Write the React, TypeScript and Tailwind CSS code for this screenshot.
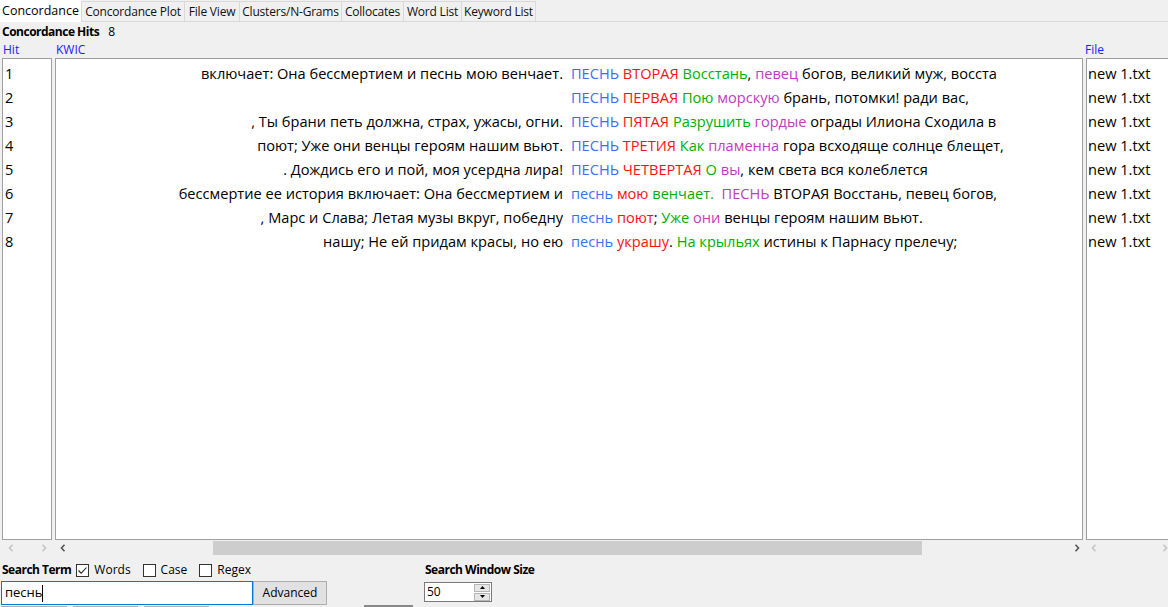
import React from "react";

type Seg = { t: string; c?: string };
type Row = { left: string; right: Seg[] };

const B = "#3f6ef5";
const R = "#ff1010";
const G = "#00b000";
const M = "#c03cc0";

const rows: Row[] = [
  {
    left: "включает: Она бессмертием и песнь мою венчает.",
    right: [
      { t: "ПЕСНЬ", c: B },
      { t: " " },
      { t: "ВТОРАЯ", c: R },
      { t: " " },
      { t: "Восстань", c: G },
      { t: ", " },
      { t: "певец", c: M },
      { t: " богов, великий муж, восста" },
    ],
  },
  {
    left: "",
    right: [
      { t: "ПЕСНЬ", c: B },
      { t: " " },
      { t: "ПЕРВАЯ", c: R },
      { t: " " },
      { t: "Пою", c: G },
      { t: " " },
      { t: "морскую", c: M },
      { t: " брань, потомки! ради вас," },
    ],
  },
  {
    left: ", Ты брани петь должна, страх, ужасы, огни.",
    right: [
      { t: "ПЕСНЬ", c: B },
      { t: " " },
      { t: "ПЯТАЯ", c: R },
      { t: " " },
      { t: "Разрушить", c: G },
      { t: " " },
      { t: "гордые", c: M },
      { t: " ограды Илиона Сходила в" },
    ],
  },
  {
    left: "поют; Уже они венцы героям нашим вьют.",
    right: [
      { t: "ПЕСНЬ", c: B },
      { t: " " },
      { t: "ТРЕТИЯ", c: R },
      { t: " " },
      { t: "Как", c: G },
      { t: " " },
      { t: "пламенна", c: M },
      { t: " гора всходяще солнце блещет," },
    ],
  },
  {
    left: ". Дождись его и пой, моя усердна лира!",
    right: [
      { t: "ПЕСНЬ", c: B },
      { t: " " },
      { t: "ЧЕТВЕРТАЯ", c: R },
      { t: " " },
      { t: "О", c: G },
      { t: " " },
      { t: "вы", c: M },
      { t: ", кем света вся колеблется" },
    ],
  },
  {
    left: "бессмертие ее история включает: Она бессмертием и",
    right: [
      { t: "песнь", c: B },
      { t: " " },
      { t: "мою", c: R },
      { t: " " },
      { t: "венчает.", c: G },
      { t: "\u00a0\u00a0" },
      { t: "ПЕСНЬ", c: M },
      { t: " ВТОРАЯ Восстань, певец богов," },
    ],
  },
  {
    left: ", Марс и Слава; Летая музы вкруг, победну",
    right: [
      { t: "песнь", c: B },
      { t: " " },
      { t: "поют", c: R },
      { t: "; " },
      { t: "Уже", c: G },
      { t: " " },
      { t: "они", c: M },
      { t: " венцы героям нашим вьют." },
    ],
  },
  {
    left: "нашу; Не ей придам красы, но ею",
    right: [
      { t: "песнь", c: B },
      { t: " " },
      { t: "украшу", c: R },
      { t: ". " },
      { t: "На крыльях", c: G },
      { t: " истины к Парнасу прелечу;" },
    ],
  },
];

const tabs = [
  { label: "Concordance", w: "w-[81px]", active: true },
  { label: "Concordance Plot", w: "w-[103px]" },
  { label: "File View", w: "w-[55px]" },
  { label: "Clusters/N-Grams", w: "w-[102px]" },
  { label: "Collocates", w: "w-[62px]" },
  { label: "Word List", w: "w-[58px]" },
  { label: "Keyword List", w: "w-[74px]" },
];

function Chevron({ dir, className }: { dir: "left" | "right"; className?: string }) {
  return (
    <svg viewBox="0 0 6 8" className={className} width="6" height="8">
      {dir === "left" ? (
        <path d="M4.5 0.8 L1.5 4 L4.5 7.2" fill="none" stroke="currentColor" strokeWidth="1.6" />
      ) : (
        <path d="M1.5 0.8 L4.5 4 L1.5 7.2" fill="none" stroke="currentColor" strokeWidth="1.6" />
      )}
    </svg>
  );
}

function Checkbox({ checked }: { checked?: boolean }) {
  return (
    <div className="w-[13px] h-[13px] border border-[#333] bg-white flex items-center justify-center">
      {checked && (
        <svg viewBox="0 0 11 11" width="11" height="11">
          <path d="M1.5 5.5 L4.2 8.2 L9.5 2.5" fill="none" stroke="#222" strokeWidth="1.1" />
        </svg>
      )}
    </div>
  );
}

export default function App() {
  return (
    <div
      className="w-[1168px] h-[607px] overflow-hidden bg-[#f0f0f0] text-[#000] flex flex-col"
      style={{ fontFamily: '"Open Sans", "Noto Sans", sans-serif' }}
    >
      {/* Tabs */}
      <div className="h-[22px] shrink-0 flex items-end border-b border-[#d9d9d9]">
        {tabs.map((t) =>
          t.active ? (
            <div
              key={t.label}
              className={`${t.w} h-[22px] bg-white flex items-center justify-center text-[12.5px] -mb-px`}
            >
              {t.label}
            </div>
          ) : (
            <div
              key={t.label}
              className={`${t.w} h-[20px] border-l border-t border-[#d9d9d9] flex items-center justify-center text-[12px] tracking-[-0.2px] text-[#111]`}
            >
              {t.label}
            </div>
          )
        )}
        <div className="w-px h-[20px] bg-[#d9d9d9]" />
      </div>

      {/* Hits */}
      <div className="h-[19px] shrink-0 flex items-center gap-[9px] pl-[2px] pt-[1px] text-[12px]">
        <span className="font-bold tracking-[-0.5px]">Concordance Hits</span>
        <span>8</span>
      </div>

      {/* Column labels */}
      <div className="h-[17px] shrink-0 flex items-center text-[12px] text-[#1a1aff]">
        <div className="w-[55px] pl-[3px]">Hit</div>
        <div className="w-[1030px] pl-[1px]">KWIC</div>
        <div>File</div>
      </div>

      {/* Panels */}
      <div className="h-[482px] shrink-0 flex gap-[3px] pl-[2px] text-[14.6px] leading-[24px]">
        <div className="w-[50px] bg-white border border-[#a0a0a0] pt-[2px] pl-[2px]">
          {rows.map((_, i) => (
            <div key={i}>{i + 1}</div>
          ))}
        </div>
        <div className="w-[1028px] bg-white border border-[#a0a0a0] pt-[2px]">
          {rows.map((r, i) => (
            <div key={i} className="flex whitespace-nowrap">
              <div className="w-[507px] text-right overflow-hidden">{r.left}</div>
              <div className="pl-[8px]">
                {r.right.map((s, j) => (
                  <span key={j} style={s.c ? { color: s.c } : undefined}>
                    {s.t}
                  </span>
                ))}
              </div>
            </div>
          ))}
        </div>
        <div className="flex-1 bg-white border border-[#a0a0a0] border-r-0 pt-[2px] pl-[1px]">
          {rows.map((_, i) => (
            <div key={i}>new 1.txt</div>
          ))}
        </div>
      </div>

      {/* Scrollbars */}
      <div className="h-[16px] shrink-0 flex items-center">
        <div className="w-[55px] flex items-center gap-[27px] pl-[8px] text-[#c4c4c4]">
          <Chevron dir="left" />
          <Chevron dir="right" />
        </div>
        <div className="w-[1031px] flex items-center h-full">
          <div className="w-[158px] pl-[5px] text-[#555] flex items-center">
            <Chevron dir="left" />
          </div>
          <div className="w-[709px] h-[14px] bg-[#cdcdcd]" />
          <div className="flex-1 flex justify-end pr-[6px] text-[#555]">
            <Chevron dir="right" />
          </div>
        </div>
        <div className="flex-1 flex items-center justify-between pl-[5px] text-[#c4c4c4]">
          <Chevron dir="left" />
          <Chevron dir="right" />
        </div>
      </div>

      {/* Search controls */}
      <div className="flex shrink-0 pt-[4px] text-[12px]">
        <div className="w-[424px] pl-[2px]">
          <div className="h-[20px] flex items-center">
            <span className="font-bold tracking-[-0.5px] mr-[5px]">Search Term</span>
            <Checkbox checked />
            <span className="ml-[5px] mr-[12px]">Words</span>
            <Checkbox />
            <span className="ml-[5px] mr-[12px]">Case</span>
            <Checkbox />
            <span className="ml-[5px]">Regex</span>
          </div>
          <div className="flex mt-[1px] -ml-[1px]">
            <div className="w-[252px] h-[24px] border border-[#0078d7] bg-white flex items-center pl-[3px] text-[13px]">
              песнь<span className="w-px h-[17px] bg-black" />
            </div>
            <button className="w-[74px] h-[24px] bg-[#e1e1e1] border border-[#adadad] text-[12px]">
              Advanced
            </button>
          </div>
          <div className="flex gap-[6px] mt-[1px] -ml-[1px]">
            <div className="w-[66px] h-[20px] border border-[#adadad] bg-[#e1e1e1]" />
            <div className="w-[65px] h-[20px] border border-[#adadad] bg-[#e1e1e1]" />
            <div className="w-[65px] h-[20px] border border-[#adadad] bg-[#e1e1e1]" />
          </div>
        </div>
        <div className="w-[120px]">
          <div className="h-[20px] flex items-center pl-[1px] font-bold tracking-[-0.5px]">
            Search Window Size
          </div>
          <div className="mt-[2px] w-[68px] h-[20px] border border-[#7a7a7a] bg-white flex items-center">
            <span className="flex-1 pl-[2px] text-[12px]">50</span>
            <div className="w-[17px] flex flex-col gap-px pr-[1px]">
              <div className="h-[8px] bg-[#e6e6e6] border border-[#b5b5b5] flex items-center justify-center">
                <svg width="5" height="3" viewBox="0 0 5 3">
                  <path d="M0 3 L2.5 0 L5 3Z" fill="#000" />
                </svg>
              </div>
              <div className="h-[8px] bg-[#e6e6e6] border border-[#b5b5b5] flex items-center justify-center">
                <svg width="5" height="3" viewBox="0 0 5 3">
                  <path d="M0 0 L2.5 3 L5 0Z" fill="#000" />
                </svg>
              </div>
            </div>
          </div>
        </div>
        <div className="pt-[45px] -ml-[180px]">
          <div className="w-[49px] h-[20px] border-t-2 border-[#888]" />
        </div>
      </div>
    </div>
  );
}
